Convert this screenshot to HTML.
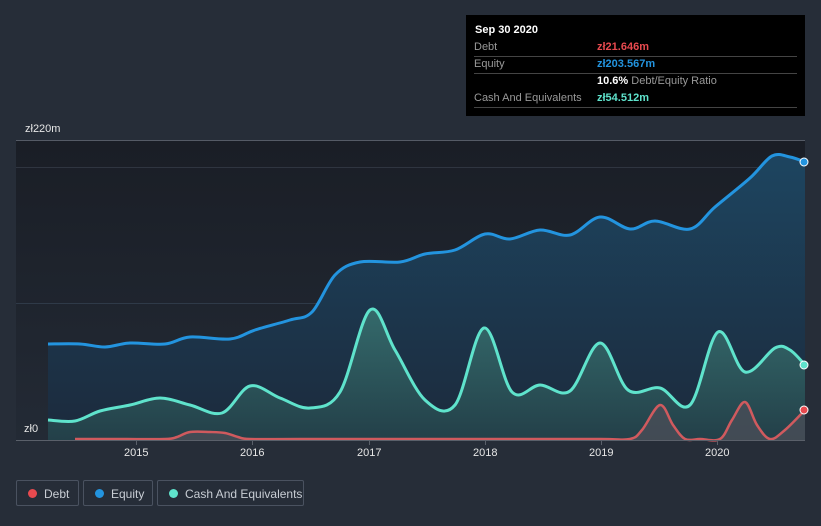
<!DOCTYPE html>
<html><head><meta charset="utf-8"><style>
body{margin:0;width:821px;height:526px;background:#262d38;font-family:"Liberation Sans",sans-serif;overflow:hidden;position:relative}
.tip{position:absolute;left:466px;top:15px;width:339px;height:101px;background:#000;color:#ddd;font-size:11px}
.tip .r{position:absolute;left:8px;right:8px;border-bottom:1px solid #444;height:17px;line-height:16px}
.lbl{color:#999}
.leg{position:absolute;top:480px;height:26px;border:1px solid #4a5260;border-radius:2px;color:#c8cdd4;font-size:12px;line-height:26px;box-sizing:border-box;padding-left:27px}
.leg i{position:absolute;left:11px;top:8px;width:9px;height:9px;border-radius:50%}
.ax{position:absolute;color:#e6e6e6;font-size:11px}
</style></head><body>
<svg width="821" height="526" style="position:absolute;left:0;top:0">
<defs>
<linearGradient id="bg" x1="0" y1="0" x2="0" y2="1"><stop offset="0" stop-color="#1a1e26"/><stop offset="1" stop-color="#232a35"/></linearGradient>
<linearGradient id="eq" x1="0" y1="0" x2="0" y2="1"><stop offset="0" stop-color="#1d4560"/><stop offset="1" stop-color="#1c2a3c"/></linearGradient>
<linearGradient id="ca" x1="0" y1="0" x2="0" y2="1"><stop offset="0" stop-color="#37706f"/><stop offset="1" stop-color="#24424a"/></linearGradient>
</defs>
<rect x="16" y="140" width="789" height="300" fill="url(#bg)"/>
<line x1="16" y1="140.5" x2="805" y2="140.5" stroke="#555b66"/>
<line x1="16" y1="167.5" x2="805" y2="167.5" stroke="#2f3540"/>
<line x1="16" y1="303.5" x2="805" y2="303.5" stroke="#2f3a48"/>
<path id="eqA" fill="url(#eq)"/><path id="caA" fill="url(#ca)" opacity="0.9"/><path id="deA" fill="#4a4d57" opacity="0.8"/>
<path id="eqL" fill="none" stroke="#2394df" stroke-width="3"/>
<path id="caL" fill="none" stroke="#5fe3cc" stroke-width="3"/>
<path id="deL" fill="none" stroke="#d05a5e" stroke-width="2.5"/>
<line x1="16" y1="440.5" x2="805" y2="440.5" stroke="#5a606a"/>
<g stroke="#5a606a"><line x1="136.5" y1="440" x2="136.5" y2="445"/><line x1="252.5" y1="440" x2="252.5" y2="445"/><line x1="369.5" y1="440" x2="369.5" y2="445"/><line x1="485.5" y1="440" x2="485.5" y2="445"/><line x1="601.5" y1="440" x2="601.5" y2="445"/><line x1="717.5" y1="440" x2="717.5" y2="445"/></g>
<circle cx="804" cy="162" r="4" fill="#2394df" stroke="#fff"/>
<circle cx="804" cy="365" r="4" fill="#5fe3cc" stroke="#fff"/>
<circle cx="804" cy="410" r="4" fill="#e84a4f" stroke="#fff"/>
</svg>
<script>
function sm(p){let d="M"+p[0][0]+","+p[0][1];for(let i=0;i<p.length-1;i++){const a=p[i-1]||p[i],b=p[i],c=p[i+1],e=p[i+2]||c;d+=" C"+(b[0]+(c[0]-a[0])/6)+","+(b[1]+(c[1]-a[1])/6)+" "+(c[0]-(e[0]-b[0])/6)+","+(c[1]-(e[1]-b[1])/6)+" "+c[0]+","+c[1];}return d;}
const E=[[48,344],[80,344],[105,347],[130,343],[165,344],[190,337],[230,339],[255,330],[290,320],[312,312],[335,275],[360,262],[400,262],[425,254],[455,250],[485,234],[510,239],[540,230],[570,235],[600,217],[630,229],[655,221],[690,229],[715,207],[750,178],[772,156],[790,157],[805,162]];
const C=[[48,420],[75,421],[100,411],[130,405],[160,398],[190,405],[222,413],[250,386],[280,398],[310,408],[340,392],[370,310],[395,350],[425,400],[455,405],[484,328],[512,392],[540,385],[570,391],[600,343],[628,390],[660,388],[690,405],[718,332],[745,372],[775,348],[790,350],[805,365]];
const D=[[75,439],[120,439],[165,439],[177,437],[190,432],[210,432],[225,433],[238,437],[250,439],[300,439],[400,439],[500,439],[600,439],[630,439],[642,430],[660,405],[673,425],[685,439],[700,439],[720,439],[732,420],[745,402],[757,425],[770,439],[785,430],[805,410]];
function set(id,p){const d=sm(p);document.getElementById(id+"L").setAttribute("d",d);document.getElementById(id+"A").setAttribute("d",d+" L"+p[p.length-1][0]+",440 L"+p[0][0]+",440Z");}
set("eq",E);set("ca",C);set("de",D);
</script>
<div class="ax" style="left:25px;top:123px">zł220m</div>
<div class="ax" style="left:24px;top:423px">zł0</div>
<div class="ax" style="left:124px;top:447px">2015</div>
<div class="ax" style="left:240px;top:447px">2016</div>
<div class="ax" style="left:357px;top:447px">2017</div>
<div class="ax" style="left:473px;top:447px">2018</div>
<div class="ax" style="left:589px;top:447px">2019</div>
<div class="ax" style="left:705px;top:447px">2020</div>
<div class="tip">
<div style="position:absolute;left:9px;top:9px;font-weight:bold;color:#fff">Sep 30 2020</div>
<div class="r" style="top:24px"><span class="lbl">Debt</span><span style="position:absolute;left:123px;color:#e84a4f;font-weight:bold">zł21.646m</span></div>
<div class="r" style="top:41px"><span class="lbl">Equity</span><span style="position:absolute;left:123px;color:#2394df;font-weight:bold">zł203.567m</span></div>
<div class="r" style="top:58px;border:none"><span style="position:absolute;left:123px"><b style="color:#fff">10.6%</b> <span class="lbl">Debt/Equity Ratio</span></span></div>
<div class="r" style="top:75px"><span class="lbl">Cash And Equivalents</span><span style="position:absolute;left:123px;color:#5fe3cc;font-weight:bold">zł54.512m</span></div>
</div>
<div class="leg" style="left:16px;width:63px"><i style="background:#e84a4f"></i>Debt</div>
<div class="leg" style="left:83px;width:70px"><i style="background:#2394df"></i>Equity</div>
<div class="leg" style="left:157px;width:147px"><i style="background:#5fe3cc"></i>Cash And Equivalents</div>
</body></html>
